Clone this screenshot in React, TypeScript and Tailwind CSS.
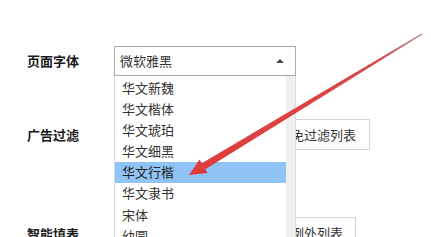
import React from "react";

const fonts = ["华文新魏", "华文楷体", "华文琥珀", "华文细黑", "华文行楷", "华文隶书", "宋体", "幼圆"];

const App = () => {
  return (
    <div
      className="relative w-[431px] h-[237px] overflow-hidden bg-white text-[13px] text-[#333]"
      style={{ fontFamily: '"Noto Sans CJK SC", "Noto Sans", sans-serif' }}
    >
      <div className="flex flex-col pl-[27px] pt-[46px]">
        {/* 页面字体 */}
        <div className="flex items-center h-[30px]">
          <span className="w-[87px] font-bold text-[#1a1a1a]">页面字体</span>
          <div className="flex items-center justify-between w-[182px] h-[30px] border border-[#a8a8a8] pl-[5px] pr-[11px]">
            <span>微软雅黑</span>
            <span className="w-0 h-0 border-l-[4px] border-r-[4px] border-b-[4px] border-l-transparent border-r-transparent border-b-[#444]" />
          </div>
        </div>

        {/* 广告过滤 */}
        <div className="flex items-center h-[31px] mt-[43px]">
          <span className="w-[87px] font-bold text-[#1a1a1a]">广告过滤</span>
          <button className="ml-[124px] h-[31px] px-[13px] border border-[#d4d4d4] bg-white whitespace-nowrap">
            管理豁免过滤列表
          </button>
        </div>

        {/* 智能填表 */}
        <div className="flex items-center h-[31px] mt-[67px]">
          <span className="w-[87px] font-bold text-[#1a1a1a] pt-[2px]">智能填表</span>
          <button className="ml-[138px] h-[31px] px-[12px] border border-[#d4d4d4] bg-white whitespace-nowrap">
            编辑例外列表
          </button>
        </div>
      </div>

      {/* dropdown list */}
      <div className="absolute left-[114px] top-[76px] w-[182px] h-[170px] flex bg-white border-l border-r border-[#dcdcdc]">
        <div className="flex-1 flex flex-col pt-[1px]">
          {fonts.map((f, i) => (
            <div
              key={f}
              className={
                i === 4
                  ? "h-[21.5px] flex items-center pl-[7px] bg-[#91c4f6] text-[#222]"
                  : "h-[21.5px] flex items-center pl-[7px]"
              }
            >
              {f}
            </div>
          ))}
        </div>
        <div className="w-[9px] bg-[#efefef]" />
      </div>

      {/* red arrow */}
      <svg className="absolute left-0 top-0 pointer-events-none" width="431" height="237" viewBox="0 0 431 237">
        <defs>
          <linearGradient id="shaft" x1="189" y1="175" x2="422" y2="34" gradientUnits="userSpaceOnUse">
            <stop offset="0" stopColor="#e03c3c" />
            <stop offset="0.8" stopColor="#d94848" />
            <stop offset="1" stopColor="#b08890" />
          </linearGradient>
        </defs>
        <polygon
          points="189,175 207.7,173 205.4,169.2 422.4,34.6 421.6,33.4 201.8,163.2 199.5,159.4"
          fill="url(#shaft)"
        />
      </svg>
    </div>
  );
};

export default App;
